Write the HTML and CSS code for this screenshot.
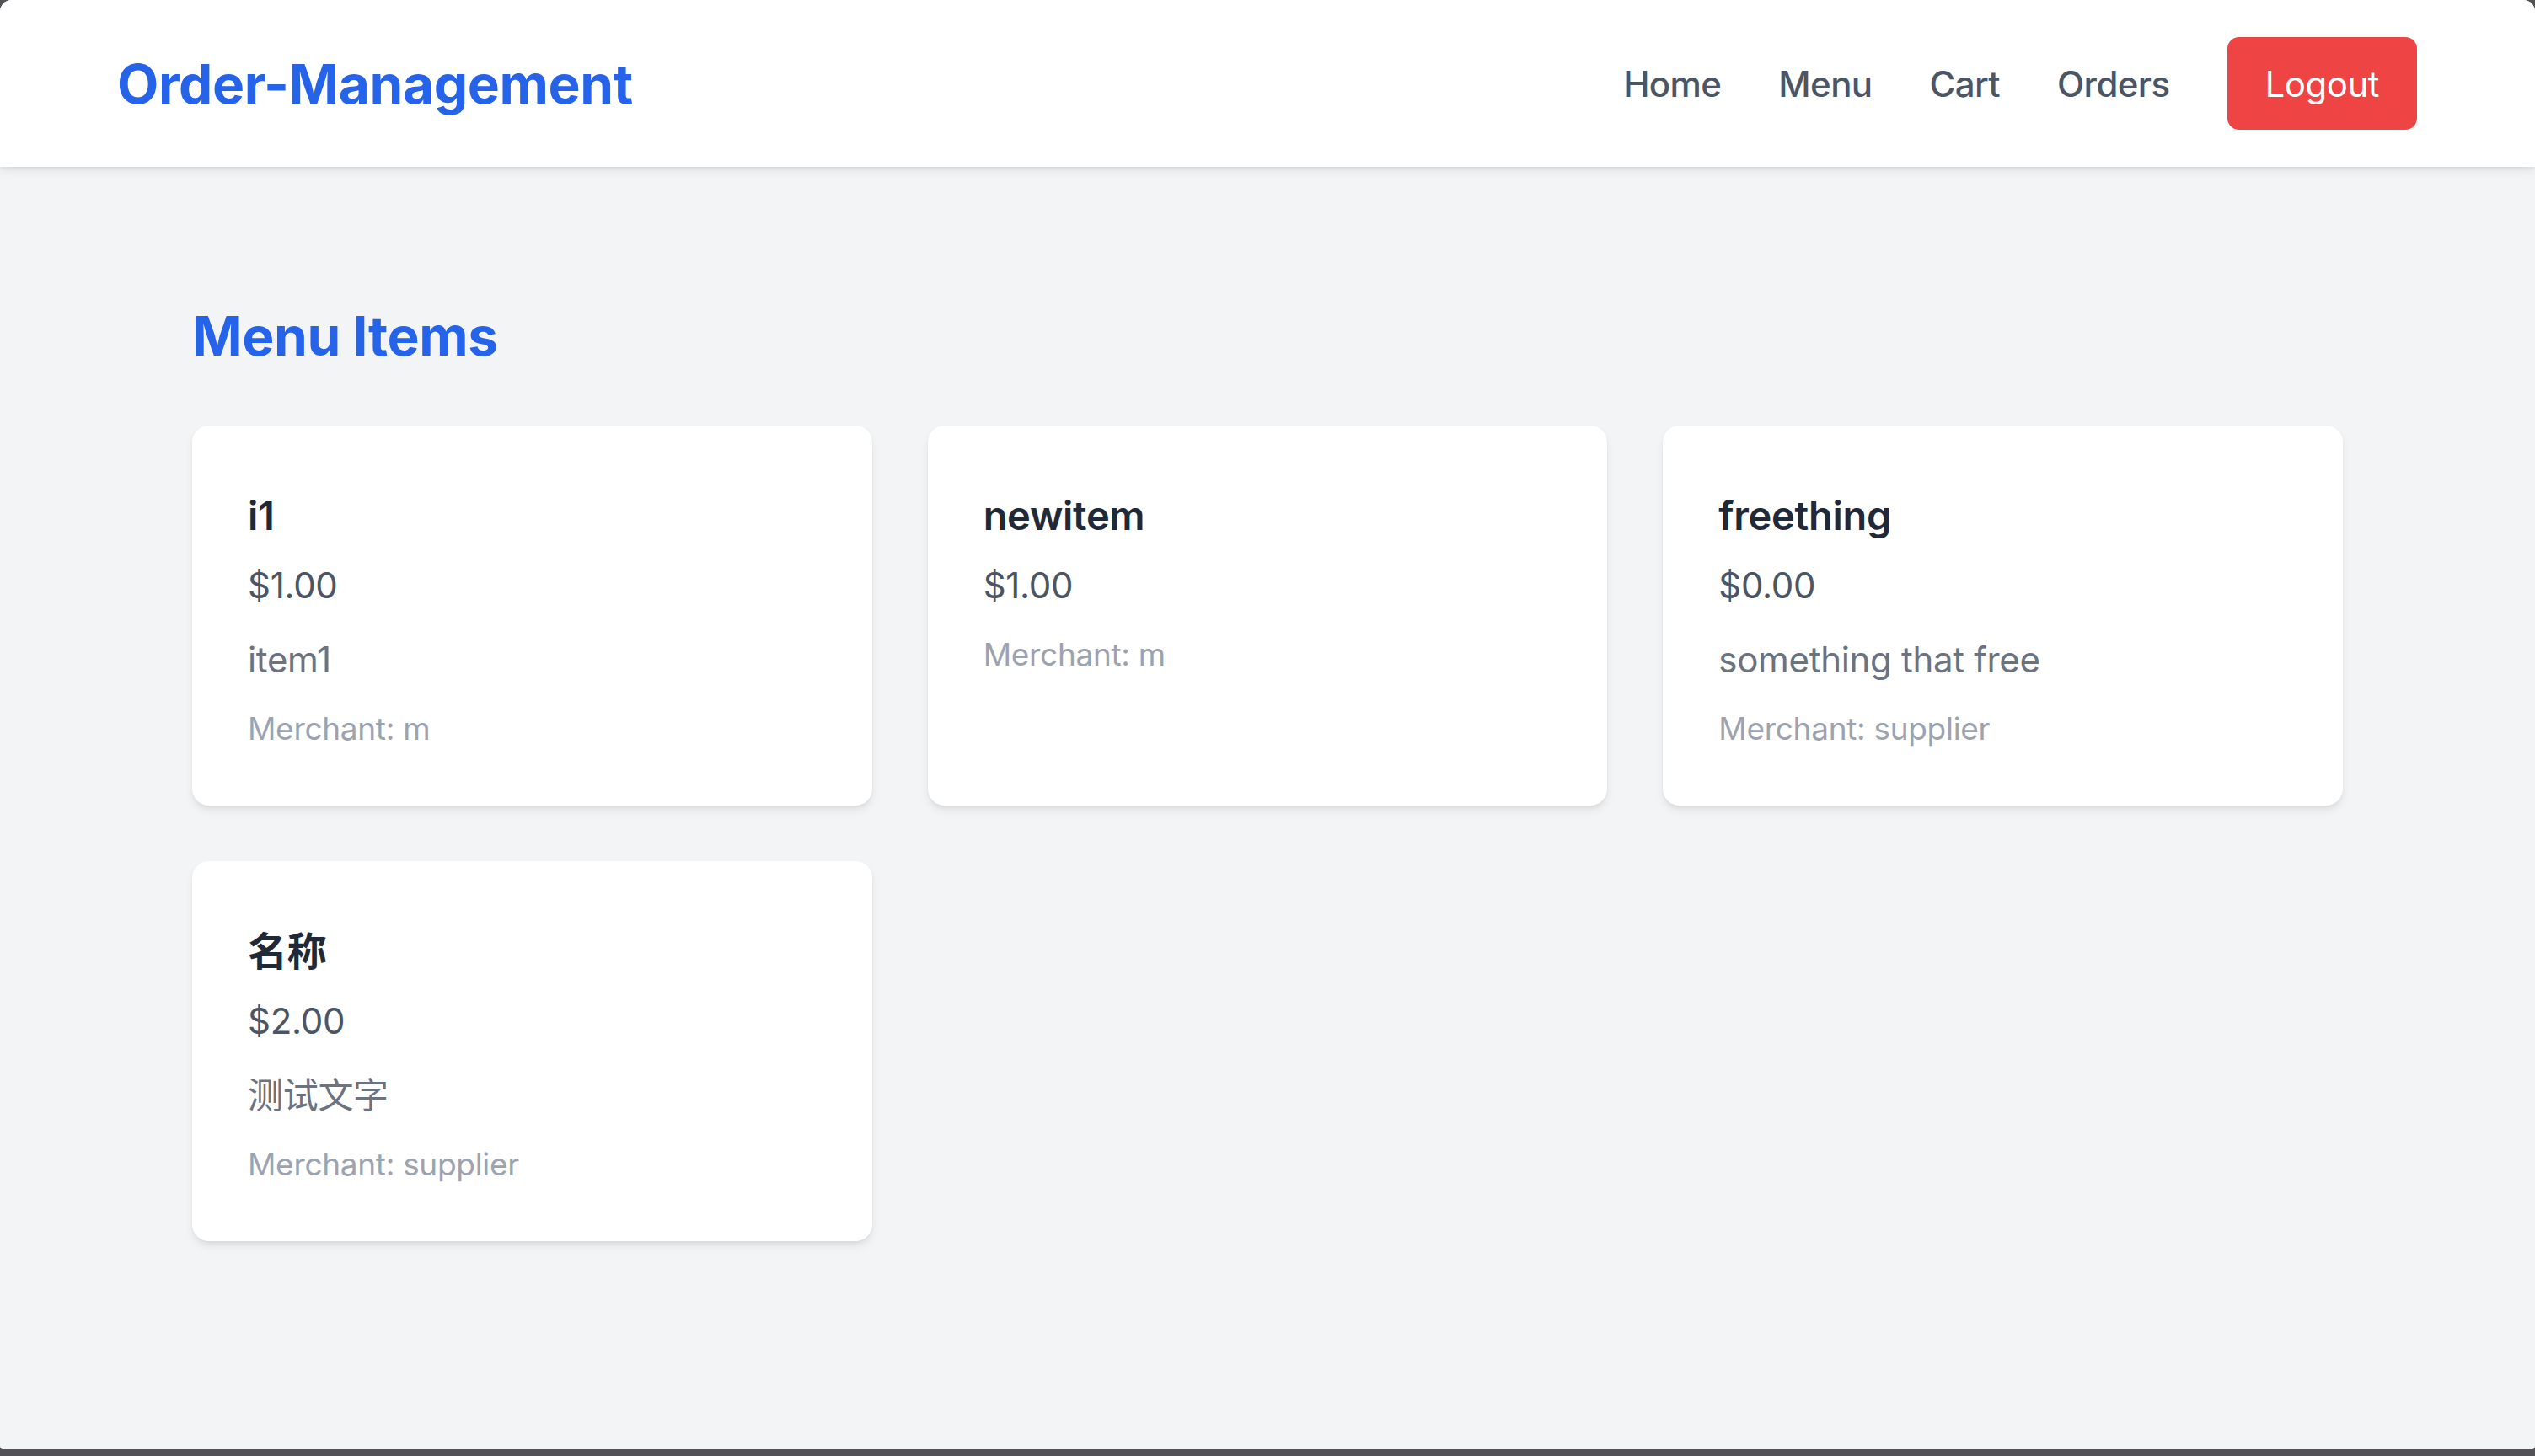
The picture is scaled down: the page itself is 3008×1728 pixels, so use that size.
FILE: index.html
```html
<!DOCTYPE html>
<html lang="en">
<head>
<meta charset="utf-8">
<title>Order-Management</title>
<link rel="stylesheet" href="styles.css">
</head>
<body>
<div class="window">
  <header class="topbar">
    <a class="brand" href="#">Order-Management</a>
    <nav class="nav">
      <a class="nav-link" href="#">Home</a>
      <a class="nav-link" href="#">Menu</a>
      <a class="nav-link" href="#">Cart</a>
      <a class="nav-link" href="#">Orders</a>
      <button class="logout" type="button">Logout</button>
    </nav>
  </header>
  <main class="main">
    <h1 class="page-title">Menu Items</h1>
    <div class="grid">
      <div class="card">
        <h2 class="card-title">i1</h2>
        <p class="price">$1.00</p>
        <p class="desc">item1</p>
        <p class="merchant">Merchant: m</p>
      </div>
      <div class="card">
        <h2 class="card-title">newitem</h2>
        <p class="price">$1.00</p>
        <p class="merchant">Merchant: m</p>
      </div>
      <div class="card">
        <h2 class="card-title">freething</h2>
        <p class="price">$0.00</p>
        <p class="desc">something that free</p>
        <p class="merchant">Merchant: supplier</p>
      </div>
      <div class="card">
        <h2 class="card-title">名称</h2>
        <p class="price">$2.00</p>
        <p class="desc">测试文字</p>
        <p class="merchant">Merchant: supplier</p>
      </div>
    </div>
  </main>
</div>
</body>
</html>
```

FILE: styles.css
```css
html {
  background: #525257;
}
body {
  margin: 0;
  font-family: Inter, "Noto Sans CJK SC", sans-serif;
}
.window {
  height: 1720px;
  background: #f3f4f6;
  border-radius: 14px 14px 4px 4px;
  overflow: hidden;
}
.topbar {
  height: 198px;
  background: #ffffff;
  box-shadow: 0 4px 12px rgba(0, 0, 0, 0.08), 0 2px 4px rgba(0, 0, 0, 0.06);
  display: flex;
  align-items: center;
  justify-content: space-between;
  padding: 0 140px 0 139px;
  position: relative;
}
.brand {
  color: #2563eb;
  font-weight: 700;
  font-size: 64px;
  letter-spacing: -0.4px;
  text-decoration: none;
}
.nav {
  display: flex;
  align-items: center;
  gap: 68px;
}
.nav-link {
  color: #4b5563;
  font-size: 42px;
  font-weight: 500;
  letter-spacing: -0.6px;
  text-decoration: none;
}
.logout {
  background: #ef4444;
  color: #ffffff;
  border: none;
  border-radius: 14px;
  height: 110px;
  padding: 0 45px;
  font-family: Inter, sans-serif;
  font-size: 42px;
  font-weight: 400;
  letter-spacing: -0.5px;
}
.main {
  width: 2552px;
  margin: 0 auto;
  padding-top: 161px;
}
.page-title {
  margin: 0 0 66px;
  color: #2563eb;
  font-size: 64px;
  line-height: 80px;
  font-weight: 700;
  letter-spacing: -0.4px;
}
.grid {
  display: grid;
  grid-template-columns: repeat(3, 1fr);
  gap: 66px;
}
.card {
  background: #ffffff;
  border-radius: 20px;
  box-shadow: 0 6px 12px -2px rgba(0, 0, 0, 0.1), 0 3px 6px -3px rgba(0, 0, 0, 0.08);
  padding: 68px 66px 66px;
  height: 451px;
  box-sizing: border-box;
}
.card p,
.card h2 {
  margin: 0;
}
.card-title {
  font-size: 47px;
  line-height: 78px;
  font-weight: 600;
  color: #1f2937;
  letter-spacing: -0.3px;
}
.price {
  margin-top: 16px !important;
  font-size: 42px;
  line-height: 56px;
  color: #4b5563;
  letter-spacing: -0.3px;
}
.desc {
  margin-top: 32px !important;
  font-size: 42px;
  line-height: 56px;
  color: #6b7280;
  letter-spacing: -0.3px;
}
.merchant {
  margin-top: 30px !important;
  font-size: 37px;
  line-height: 48px;
  color: #9ca3af;
  letter-spacing: -0.3px;
}
```
